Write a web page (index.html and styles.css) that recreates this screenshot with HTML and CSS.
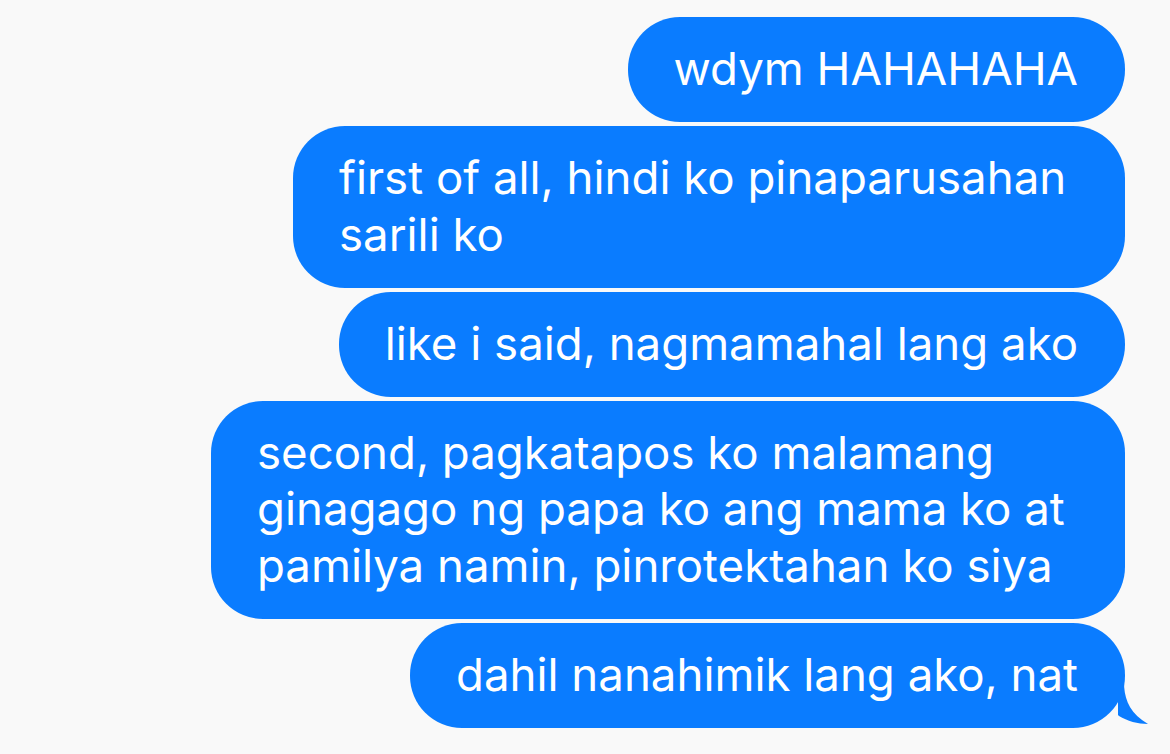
FILE: index.html
```html
<!DOCTYPE html>
<html>
<head>
<meta charset="utf-8">
<link rel="stylesheet" href="styles.css">
</head>
<body>
<main class="thread">
  <div class="bubble">wdym HAHAHAHA</div>
  <div class="bubble wide-a">first of all, hindi ko pinaparusahan<br>sarili ko</div>
  <div class="bubble">like i said, nagmamahal lang ako</div>
  <div class="bubble wide-b">second, pagkatapos ko malamang<br>ginagago ng papa ko ang mama ko at<br>pamilya namin, pinrotektahan ko siya</div>
  <div class="bubble last">dahil nanahimik lang ako, nat<svg class="tail" width="32" height="44" viewBox="0 0 32 44"><path d="M0 0 L6 0 C6 14 10 28 24 38 L30 42 C20 42 9 39 1 34 L0 33 Z" fill="#0a7cff"/></svg></div>
</main>
</body>
</html>
```
FILE: styles.css
```css
html, body {
  margin: 0;
  padding: 0;
  background: #f9f9f9;
}
.thread {
  display: flex;
  flex-direction: column;
  align-items: flex-end;
  gap: 4px;
  padding: 17px 45px 0 0;
}
.bubble {
  position: relative;
  box-sizing: border-box;
  background: #0a7cff;
  color: #ffffff;
  font-family: Inter, "Noto Sans", sans-serif;
  font-size: 45.6px;
  line-height: 56.5px;
  padding: 24px 47px 24.5px 46px;
  border-radius: 52px;
  white-space: nowrap;
}
.wide-a { width: 832px; }
.wide-b { width: 914px; }
.tail {
  position: absolute;
  right: -25px;
  bottom: 2px;
}
```
